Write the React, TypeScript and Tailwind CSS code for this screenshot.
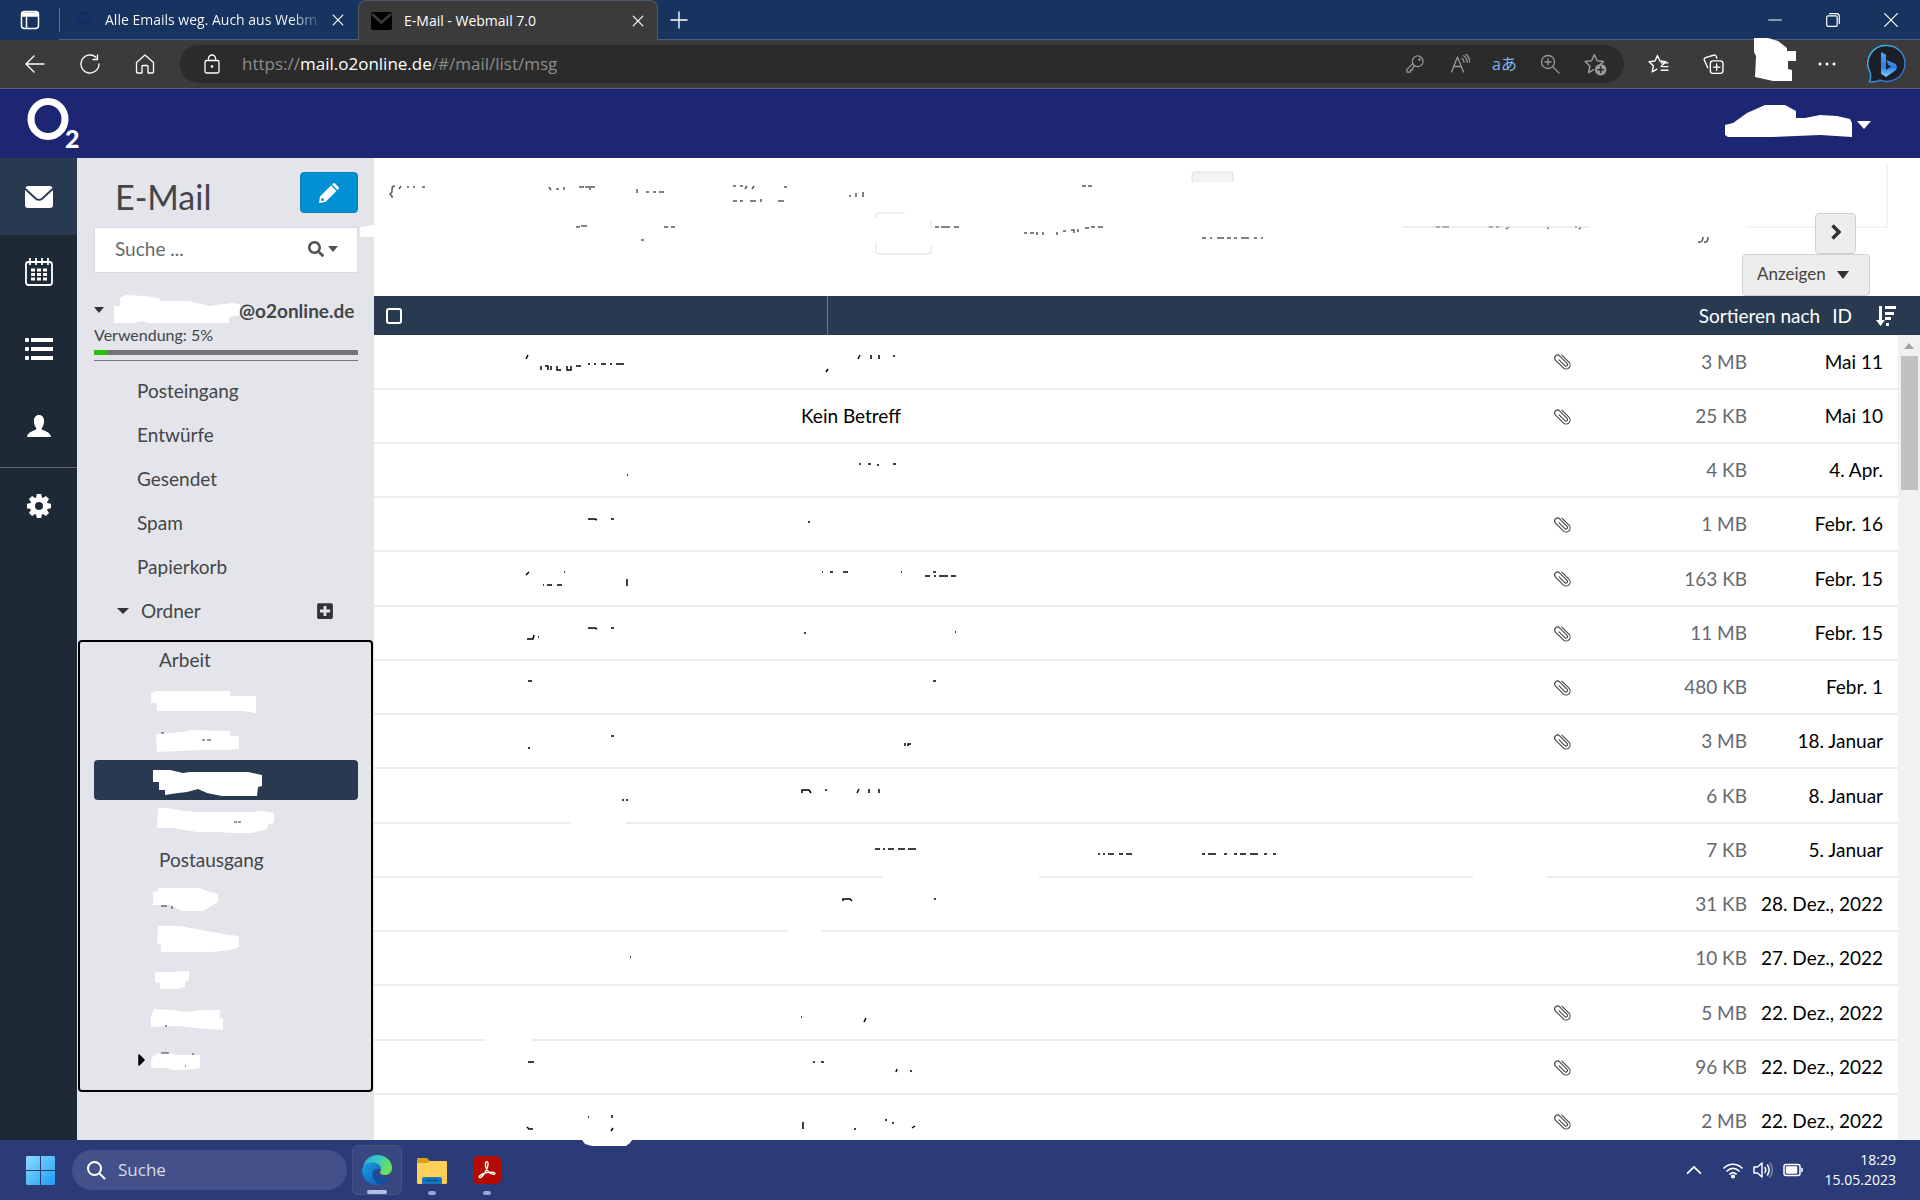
import React from "react";
import { FaCaretRight, FaPlusSquare, FaSearch } from "react-icons/fa";

// Define the type for one message in the list
interface Message {
  subject?: string;
  attachment?: boolean;
  size: string;
  date: string;
  // leftovers of the covered sender and subject
  marks?: string;
  // covered stretches of the line under the row: [x, width]
  gaps?: number[][];
}

interface Folder {
  name?: string;
  cover?: string;
  marks?: string;
  active?: boolean;
  expandable?: boolean;
}

const messages: Message[] = [
  {
    attachment: true,
    size: "3 MB",
    date: "Mai 11",
    marks:
      "M154 20l-2 4M167 31v4M171 31h3v4M177 31v4M183 31v4h4M193 31v4h4v-4M202 31h5M214 29h2M220 29h2M227 29h5M236 29h2M242 29h8M486 20l-2 4M497 20v4M505 20v4M520 20v2M454 34l-2 3",
  },
  { subject: "Kein Betreff", attachment: true, size: "25 KB", date: "Mai 10" },
  { size: "4 KB", date: "4. Apr.", marks: "M485 20h2M494 20h3M504 20v2M519 20h3M253 31h1" },
  { attachment: true, size: "1 MB", date: "Febr. 16", marks: "M215 22v-1h6l2 1M237 21h3M434 24h2" },
  {
    attachment: true,
    size: "163 KB",
    date: "Febr. 15",
    marks:
      "M155 20l-3 3M190 20h1M169 33h1M173 33h5M183 33h5M253 27v7M448 20h1M456 20h3M469 20h5M527 20h1M559 20h3M551 24h5M560 24h2M565 24h9M577 24h5",
  },
  {
    attachment: true,
    size: "11 MB",
    date: "Febr. 15",
    marks: "M215 22v-1h6l2 1M237 21h3M153 32h6l1-4M164 30h1M430 26h2M581 25h1",
  },
  { attachment: true, size: "480 KB", date: "Febr. 1", marks: "M154 20h4M559 20h3" },
  { attachment: true, size: "3 MB", date: "18. Januar", marks: "M237 21h3M154 33h2M531 28v3M534 31v-2h3" },
  {
    size: "6 KB",
    date: "8. Januar",
    marks: "M428 24v-3h7l2 3M451 21h2M485 20l-2 4M495 20v4M505 20v4M248 31h2M252 31h2",
    gaps: [[197, 55]],
  },
  {
    size: "7 KB",
    date: "5. Januar",
    marks:
      "M501 25h5M509 25h2M514 25h6M524 25h7M534 25h8M724 30h2M729 30h2M734 30h6M745 30h4M752 30h6M828 30h3M834 30h8M850 30h3M860 30h3M866 30h6M876 30h8M890 30h3M899 30h3",
    gaps: [[508, 157], [1099, 74]],
  },
  { size: "31 KB", date: "28. Dez., 2022", marks: "M469 23v-2h7l2 2M560 21h2", gaps: [[414, 34]] },
  { size: "10 KB", date: "27. Dez., 2022", marks: "M256 25h1" },
  {
    attachment: true,
    size: "5 MB",
    date: "22. Dez., 2022",
    marks: "M492 32l-2 4M427 31h1",
    gaps: [[112, 46]],
  },
  {
    attachment: true,
    size: "96 KB",
    date: "22. Dez., 2022",
    marks: "M154 21h6M439 21h2M447 21h3M523 28l-1 3M536 30h2",
  },
  {
    attachment: true,
    size: "2 MB",
    date: "22. Dez., 2022",
    marks: "M153 32l2 2h4M238 20v3M239 33l-2 3M214 22h1M429 27v7M511 25h2M519 27v2M480 34h2M541 31l-3 2",
  },
];

const mainFolders = ["Posteingang", "Entwürfe", "Gesendet", "Spam", "Papierkorb"];

const subFolders: Folder[] = [
  { name: "Arbeit" },
  { cover: "0,13 6,11 79,11 79,16 105,16 105,33 92,31 6,31 6,23 0,23" },
  { cover: "5,14 31,12 41,10 79,11 79,16 88,16 88,29 79,30 49,30 6,32", marks: "M10 13h3M51 20h3M56 20h4" },
  {
    active: true,
    cover:
      "2,10 19,10 32,13 39,12 97,12 111,15 111,26 107,27 106,36 71,36 56,33 47,29 36,32 27,33 14,35 14,30 8,30 8,22 2,22",
  },
  {
    cover: "7,8 17,8 32,11 49,12 99,12 109,11 123,13 123,23 117,24 116,29 101,33 82,33 66,32 46,32 22,28 6,28",
    marks: "M83 22h3M87 22h3",
  },
  { name: "Postausgang" },
  {
    cover: "2,12 7,11 7,8 49,8 56,11 67,14 67,22 62,25 52,31 31,31 19,25 2,25",
    marks: "M10 26h6M21 26v3",
  },
  { cover: "7,6 29,6 56,11 79,15 88,16 88,27 79,30 62,32 10,32 10,25 6,24" },
  { cover: "4,12 16,12 38,11 38,20 34,22 34,27 26,29 9,29 9,23 4,22" },
  { cover: "3,9 21,10 36,12 49,10 69,10 69,18 72,19 72,30 46,28 29,26 16,26 0,27 0,16", marks: "M14 26h2" },
  {
    expandable: true,
    cover: "0,18 7,13 19,13 26,15 49,15 49,28 34,30 21,30 16,28 0,28",
    marks: "M10 13h8M41 14h2M34 26h1",
  },
];

// Thin line icon used all over the browser window
const LineIcon: React.FC<{ size?: number; width?: number; children: React.ReactNode }> = ({
  size = 20,
  width = 1.3,
  children,
}) => (
  <svg
    width={size}
    height={size}
    viewBox="0 0 20 20"
    fill="none"
    stroke="currentColor"
    strokeWidth={width}
    strokeLinecap="round"
    strokeLinejoin="round"
    className="shrink-0"
  >
    {children}
  </svg>
);

const CloseIcon = () => (
  <LineIcon size={12} width={2}>
    <path d="M2 2l16 16M18 2L2 18" />
  </LineIcon>
);

const starPath = "M9 1.5l2.4 5.2 5.6.7-4.1 3.8M9 1.5L6.600 6.700l-5.600.7 4.100 3.900L4 17l4.500-2.600";

const Paperclip = () => (
  <svg width="17" height="17" viewBox="0 0 17 17" fill="none" stroke="#444" strokeWidth="1.1" strokeLinecap="round">
    <path
      d="M12.600 3.500v10a4 4 0 0 1-8 0V2.500a2.900 2.900 0 0 1 5.800 0v10.500a1.600 1.600 0 0 1-3.200 0V5"
      transform="rotate(-45 8.5 8.5)"
    />
  </svg>
);

const TabBar = () => (
  <div className="flex h-10 shrink-0 items-stretch bg-[#17335f] text-sm text-white">
    <button aria-label="Tabaktionen" className="flex w-[59px] items-center justify-center">
      <LineIcon size={20} width={1.500}>
        <rect x="1.500" y="1.500" width="17" height="17" rx="3" />
        <path d="M2 3h16v3H2z" fill="currentColor" />
        <path d="M6.500 6v12" />
      </LineIcon>
    </button>
    <div className="flex w-[299px] items-center border-b border-[#4a5f84]">
      <span className="h-6 w-px bg-[#5a6f92]" />
      <span className="ml-4 flex w-[29px] items-end text-[#122a6c]">
        <svg width="18" height="18" viewBox="0 0 18 18">
          <circle cx="7" cy="7" r="5.500" fill="none" stroke="currentColor" strokeWidth="2" />
          <path d="M13 12.500q3-1 3 1l-3 3h4" fill="none" stroke="currentColor" />
        </svg>
      </span>
      <span className="w-[219px] bg-linear-to-r from-white from-85% to-[#17335f] bg-clip-text whitespace-nowrap text-transparent">
        Alle Emails weg. Auch aus Webm
      </span>
      <button aria-label="Tab schließen" className="ml-1 flex w-5 items-center justify-center">
        <CloseIcon />
      </button>
    </div>
    <div className="flex w-[300px] items-center rounded-t-lg border border-b-0 border-[#4f5765] bg-[#3b3b3b] pl-3">
      <svg width="21" height="18" viewBox="0 0 21 18">
        <rect width="21" height="18" rx="2" fill="#000" />
        <path d="M1 2l9.500 8.500L20 2" fill="none" stroke="#3b3b3b" strokeWidth="2.500" />
      </svg>
      <span className="ml-3">E-Mail - Webmail 7.0</span>
      <button aria-label="Tab schließen" className="mr-[9px] ml-auto flex w-5 items-center justify-center">
        <CloseIcon />
      </button>
    </div>
    <div className="flex flex-1 items-center border-b border-[#4a5f84]">
      <button aria-label="Neuer Tab" className="flex w-[42px] items-center justify-center">
        <LineIcon size={18} width={1.500}>
          <path d="M10 1v18M1 10h18" />
        </LineIcon>
      </button>
      <div className="ml-auto flex h-full">
        <button aria-label="Minimieren" className="flex w-[58px] items-center justify-center">
          <LineIcon size={14} width={1.700}>
            <path d="M1 10h18" />
          </LineIcon>
        </button>
        <button aria-label="Verkleinern" className="flex w-[58px] items-center justify-center">
          <LineIcon size={14} width={1.700}>
            <rect x="1" y="4" width="15" height="15" rx="2" />
            <path d="M5 1h10a4 4 0 0 1 4 4v10" />
          </LineIcon>
        </button>
        <button aria-label="Schließen" className="flex w-[58px] items-center justify-center">
          <LineIcon size={14} width={1.700}>
            <path d="M1 1l18 18M19 1L1 19" />
          </LineIcon>
        </button>
      </div>
    </div>
  </div>
);

const AddressBar = () => (
  <div className="flex h-[49px] shrink-0 items-center border-b border-[#5d6173] bg-[#3b3b3b] text-white">
    <div className="flex w-[180px] shrink-0 items-center gap-[35px] pl-[25px]">
      <button aria-label="Zurück">
        <LineIcon>
          <path d="M1 10h18M9 2l-8 8 8 8" />
        </LineIcon>
      </button>
      <button aria-label="Aktualisieren">
        <LineIcon>
          <path d="M19 10a9 9 0 1 1-3-6.700M17.500 1v4.500H13" />
        </LineIcon>
      </button>
      <button aria-label="Startseite">
        <LineIcon>
          <path d="M1.500 8.500L10 1l8.500 7.500V18a1 1 0 0 1-1 1H13v-6.500a1 1 0 0 0-1-1H8a1 1 0 0 0-1 1V19H2.500a1 1 0 0 1-1-1z" />
        </LineIcon>
      </button>
    </div>
    <div className="flex h-[38px] flex-1 items-center rounded-full bg-[#2b2b2b] pl-[22px]">
      <LineIcon size={20}>
        <rect x="3" y="6.500" width="14" height="12.500" rx="1.500" />
        <path d="M6.500 6.500V4.500a3.500 3.500 0 0 1 7 0v2" />
        <circle cx="10" cy="12.500" r=".7" fill="currentColor" />
      </LineIcon>
      <div className="ml-5 flex-1 text-[17px] leading-6 text-[#8d8d8d]">
        https://<span className="text-white">mail.o2online.de</span>/#/mail/list/msg
      </div>
      <div className="flex items-center text-[#9b9b9b]">
        <button aria-label="Kennwort" className="flex w-[45px] justify-center">
          <LineIcon size={18}>
            <circle cx="13" cy="7" r="6" />
            <circle cx="15" cy="5" r=".8" />
            <path d="M7.500 9.500L1 16v3h4v-2.500h2.500V14l2.500-1.700" />
          </LineIcon>
        </button>
        <button aria-label="Laut vorlesen" className="flex w-[45px] justify-center">
          <LineIcon>
            <path d="M1.500 18L7.500 3l6 15M3.800 12.500h7.500M12 4.500c1.200.8 2 2.200 2 3.800M13.500 1.800c2.300 1.300 3.700 3.700 3.700 6.500M15.500 0c2.800 1.900 4.300 5 4.300 8.300" />
          </LineIcon>
        </button>
        <button aria-label="Übersetzen" className="flex w-[45px] justify-center text-base text-[#76b9ed]">
          aあ
        </button>
        <button aria-label="Zoom" className="flex w-[45px] justify-center">
          <LineIcon>
            <circle cx="8" cy="8" r="6.500" />
            <path d="M13 13l6 6M8 5v6M5 8h6" />
          </LineIcon>
        </button>
        <button aria-label="Zu Favoriten hinzufügen" className="mr-[5px] flex w-[47px] justify-center">
          <LineIcon size={23}>
            <path d={starPath} />
            <circle cx="14.500" cy="14.500" r="5" fill="currentColor" stroke="none" />
            <path d="M14.500 12v5M12 14.500h5" stroke="#2b2b2b" />
          </LineIcon>
        </button>
      </div>
    </div>
    <div className="flex shrink-0 items-center pl-6">
      <button aria-label="Favoriten">
        <LineIcon size={21}>
          <path d={starPath} />
          <path d="M12.500 8.500H19M12.500 12H19M12.500 15.500H19" />
        </LineIcon>
      </button>
      <button aria-label="Sammlungen" className="ml-[34px]">
        <LineIcon size={21}>
          <rect x="7" y="6.500" width="12" height="12" rx="2.500" />
          <path d="M13 9.500v6M10 12.500h6M4.500 13L1.300 6a2 2 0 0 1 1-2.500L10 1.200a2 2 0 0 1 2.500 1l.8 1.800" />
        </LineIcon>
      </button>
      <svg width="42" height="44" viewBox="0 0 42 44" className="-mt-3 -mb-1 mr-[9px] ml-[30px]">
        <polygon
          points="0,0 14,0 24,3 33,10 33,13 42,13 42,23 34,23 34,31 38,32 38,43 19,43 1,39 2,18 0,14"
          fill="#fff"
        />
      </svg>
      <button aria-label="Einstellungen und mehr" className="flex w-11 justify-center">
        <svg width="18" height="4" viewBox="0 0 18 4" fill="#fff">
          <circle cx="2" cy="2" r="1.500" />
          <circle cx="9" cy="2" r="1.500" />
          <circle cx="16" cy="2" r="1.500" />
        </svg>
      </button>
      <button aria-label="Bing" className="mr-[13px] ml-[18px]">
        <svg width="40" height="40" viewBox="0 0 40 40">
          <defs>
            <linearGradient id="bingRing" x1="0" y1="0" x2="1" y2="1">
              <stop offset="0" stopColor="#3ec4e8" />
              <stop offset="1" stopColor="#2f5fd0" />
            </linearGradient>
            <linearGradient id="bingMark" x1="0" y1="0" x2="0" y2="1">
              <stop offset="0" stopColor="#4aa5f5" />
              <stop offset="0.600" stopColor="#2f7be8" />
              <stop offset="1" stopColor="#7fd4f5" />
            </linearGradient>
          </defs>
          <path
            d="M20.500 1.500a18 18 0 1 1-7.500 34.600c-3 1.600-7 2.200-10.500 1.700 1.400-2.500 1.500-5 .7-9.500A18 18 0 0 1 20.500 1.500z"
            fill="#1b1f27"
            stroke="url(#bingRing)"
            strokeWidth="1.500"
          />
          <path
            d="M14 8l5 2.500v15.200l5.500-3.200-3.500-1.600-1.500-4.800 8.500 3.300c2.500 1.400 2.500 5.600 0 7.300L19 33l-5-3.200z"
            fill="url(#bingMark)"
          />
        </svg>
      </button>
    </div>
  </div>
);

const SiteHeader = () => (
  <header className="flex h-[69px] shrink-0 items-center bg-[#1d2673] pb-0.5 text-white">
    <a href="#" aria-label="O2" className="ml-[26px]">
      <svg width="56" height="60" viewBox="0 0 56 60">
        <ellipse cx="22" cy="26" rx="17" ry="17.500" fill="none" stroke="#fff" strokeWidth="7" />
        <text x="39" y="55" fontSize="25" fontWeight="900" fill="#fff" className="font-['Lato',sans-serif]">
          2
        </text>
      </svg>
    </a>
    <button aria-label="Benutzermenü" className="mr-[49px] ml-auto flex items-center gap-[5px] pb-1">
      <svg width="127" height="32" viewBox="0 0 127 32">
        <polygon
          points="0,20 8,18 22,8 40,0 60,0 71,6 71,13 80,13 95,10 112,11 125,14 127,18 127,32 95,30 47,32 3,32 0,30"
          fill="#fff"
        />
      </svg>
      <svg width="14" height="8" viewBox="0 0 14 8" className="mt-2">
        <path d="M0 0h14L7 8z" fill="#fff" />
      </svg>
    </button>
  </header>
);

const Rail = () => (
  <nav className="flex w-[77px] shrink-0 flex-col bg-[#1e2936] text-white">
    <a href="#mail" aria-label="E-Mail" className="flex h-[77px] items-center justify-center bg-[#293a50]">
      <svg width="28" height="22" viewBox="0 0 28 22" fill="currentColor">
        <path d="M3 0h22a3 3 0 0 1 2.500 1.700L16.500 12q-2.500 2-5 0L.5 1.700A3 3 0 0 1 3 0z" />
        <path d="M0 4l10 9.300q4 3 8 0L28 4v15a3 3 0 0 1-3 3H3a3 3 0 0 1-3-3z" />
      </svg>
    </a>
    <a href="#calendar" aria-label="Kalender" className="flex h-[77px] items-center justify-center pb-1">
      <svg width="28" height="28" viewBox="0 0 28 28" fill="none" stroke="currentColor" strokeWidth="1.800">
        <rect x="1" y="4" width="26" height="23" rx="2.500" />
        <path d="M5 0v7M11 0v7M17 0v7M23 0v7" />
        <path d="M6 12h4M12 12h4M18 12h4M6 16.500h4M12 16.500h4M18 16.500h4M6 21h4M12 21h4M18 21h4" strokeWidth="3" />
      </svg>
    </a>
    <a href="#tasks" aria-label="Aufgaben" className="flex h-[77px] items-center justify-center pb-1">
      <svg width="28" height="22" viewBox="0 0 28 22" fill="currentColor">
        <rect y="0" width="4" height="4" rx="1" />
        <rect y="9" width="4" height="4" rx="1" />
        <rect y="18" width="4" height="4" rx="1" />
        <rect x="6" y="0" width="22" height="4" />
        <rect x="6" y="9" width="22" height="4" />
        <rect x="6" y="18" width="22" height="4" />
      </svg>
    </a>
    <a
      href="#contacts"
      aria-label="Kontakte"
      className="flex h-[79px] items-center justify-center border-b border-[#5b6570] pb-1"
    >
      <svg width="24" height="22" viewBox="0 0 26 22" preserveAspectRatio="none" fill="currentColor">
        <path d="M13 0c3.500 0 5.500 2.500 5.500 6 0 3-1 5.500-2.500 7v1.500c3 1.500 9.500 2.500 10 7.500H0c.5-5 7-6 10-7.500V13c-1.500-1.500-2.500-4-2.500-7C7.500 2.500 9.500 0 13 0z" />
      </svg>
    </a>
    <a href="#settings" aria-label="Einstellungen" className="flex h-[77px] items-center justify-center pb-0.5">
      <svg width="24" height="24" viewBox="0 0 24 24">
        <g fill="currentColor">
          <path d="M9.800 0h4.400l1 5h-6.400zM9.800 24h4.400l1-5h-6.400zM0 9.800v4.400l5 1v-6.400zM24 9.800v4.400l-5 1v-6.400z" />
          <path
            d="M9.800 0h4.400l1 5h-6.400zM9.800 24h4.400l1-5h-6.400zM0 9.800v4.400l5 1v-6.400zM24 9.800v4.400l-5 1v-6.400z"
            transform="rotate(45 12 12)"
          />
        </g>
        <circle cx="12" cy="12" r="6.500" fill="none" stroke="currentColor" strokeWidth="5" />
      </svg>
    </a>
  </nav>
);

const Sidebar = () => (
  <aside className="relative flex w-[297px] shrink-0 flex-col bg-[#e4e5ea] text-[19px] leading-7 text-[#434548]">
    <div className="flex h-[69px] items-start justify-between pt-3.5 pr-4 pl-[38px]">
      <h1 className="pt-[3px] text-[34px] leading-[44px]">E-Mail</h1>
      <button
        aria-label="Neue E-Mail"
        className="flex h-[41px] w-[58px] items-center justify-center rounded border border-[#0b7cb5] bg-[#0090d3] text-white"
      >
        <svg width="20" height="20" viewBox="0 0 20 20" fill="currentColor">
          <path d="M13 1.500l1-1q1-1 2 0L19.500 4q1 1 0 2l-1 1z" />
          <path d="M12 2.500L17.500 8 6.500 19 0 20l1-6.500zM2.500 15l-.4 2.900L5 17.500l-.3-2.100z" fillRule="evenodd" />
        </svg>
      </button>
    </div>
    <form className="mr-4 ml-[17px] flex h-[46px] items-center border border-[#d9dadd] bg-white pr-[19px] pb-0.5 pl-5">
      <input
        type="text"
        aria-label="Suche"
        placeholder="Suche ..."
        className="w-0 flex-1 outline-none placeholder:text-[#66696c]"
      />
      <button type="button" aria-label="Suchen" className="flex items-center gap-1 text-[#505255]">
        <FaSearch size={16} />
        <svg width="10" height="6" viewBox="0 0 10 6" fill="currentColor">
          <path d="M0 0h10L5 6z" />
        </svg>
      </button>
    </form>
    {/* covered spot beside the search box */}
    <svg width="14" height="13" viewBox="0 0 14 13" className="absolute top-[66px] right-0">
      <path d="M0 3L14 1v12H0z" fill="#fff" />
    </svg>

    {/* Account and quota */}
    <div className="mt-[22px] mr-4 ml-[17px] flex h-[30px] items-center">
      <svg width="10" height="6" viewBox="0 0 10 6" fill="#333">
        <path d="M0 0h10L5 6z" />
      </svg>
      <svg width="126" height="30" viewBox="0 0 126 30" className="ml-2.5 shrink-0">
        <polygon
          points="0,11 6,11 6,3 12,0 30,1 45,3 46,6 75,6 95,11 118,8 126,9 126,20 115,22 115,28 35,28 28,26 20,28 0,28"
          fill="#fff"
        />
      </svg>
      <span className="-ml-px pt-0.5 font-bold">@o2online.de</span>
    </div>
    <div className="mr-4 ml-[17px] border-b border-[#77797c] pb-[5px]">
      <label htmlFor="quota" className="block text-base leading-5">
        Verwendung: 5%
      </label>
      <div id="quota" role="progressbar" aria-valuenow={5} className="mt-[5px] h-[5px] bg-[#757575]">
        <div className="h-full bg-[#2dbe14]" style={{ width: "5%" }} />
      </div>
    </div>

    {/* Folders */}
    <ul className="mt-2">
      {mainFolders.map((name) => (
        <li key={name} className="flex h-11 items-center pl-[60px]">
          <a href="#folder">{name}</a>
        </li>
      ))}
      <li className="flex h-11 items-center pr-10 pl-10">
        <svg width="12" height="6" viewBox="0 0 12 6" fill="#333">
          <path d="M0 0h12L6 6z" />
        </svg>
        <span className="ml-3 flex-1">Ordner</span>
        <button aria-label="Ordner hinzufügen">
          <FaPlusSquare size={18} color="#333" />
        </button>
      </li>
    </ul>
    <ul className="mx-px mt-[7px] rounded pb-3 outline-2 -outline-offset-2 outline-black">
      {subFolders.map((folder, i) => (
        <li
          key={i}
          className={
            folder.active
              ? "mr-[15px] ml-4 flex h-10 items-center rounded-sm bg-[#293a50] pl-[57px]"
              : "relative flex h-10 items-center pl-[73px]"
          }
        >
          {folder.expandable && <FaCaretRight size={20} color="#000" className="absolute left-[54px]" />}
          {folder.name ? (
            <a href="#folder" className="pl-2">{folder.name}</a>
          ) : (
            <svg width="124" height="40" viewBox="0 0 124 40">
              <polygon points={folder.cover} fill="#fff" />
              <path d={folder.marks} fill="none" stroke="#333" />
            </svg>
          )}
        </li>
      ))}
    </ul>
  </aside>
);

const Toolbar = () => (
  <div className="relative flex h-[138px] shrink-0 flex-col items-end pt-[55px]">
    {/* what is left of the covered notice */}
    <svg className="pointer-events-none absolute top-0 left-0 h-[138px] w-full" fill="none" stroke="#55585b" strokeWidth="1.500">
      <path d="M21 28q-3 0-3 3v3l-2 2 2 2v2M27 28l-2 3M33 29h2M39 29h2M48 29h3M175 29l2 3M182 31h3M190 29v3M205 29h5M211 29h10M215 31h2M263 31v4M272 34h3M279 34h3M285 34h5M359 28h3M366 28h3M373 28l-2 3M380 28l-2 3M410 29h3M359 43h4M366 43h3M376 43h6M387 41v3M404 43h6M476 37v2M482 35v4M489 34v5" />
      <path d="M708 28h4M714 28h4M202 69h4M207 68h6M290 69h4M297 69h4M267 82h3M561 69h4M567 69h9M580 69h5M650 75h3M656 75h4M663 74v3M669 74v3M683 74v3M689 73h3M697 72h3v3M704 71v3M711 70h4M717 69h4M724 69h5M828 80h4M836 80h2M843 80h7M853 80h4M860 80h3M867 80h8M880 80h3M887 80h2" />
      <path d="M1062 69h4M1068 69h7M1115 69h4M1122 69h3M1135 69l-3 2M1174 69v2M1201 69h2M1207 69l-2 2M1329 79q0 6-5 5M1334 79q0 6-4 5" />
      <path d="M502 60v-3q0-2 3-2h26M502 85v8q0 3 3 3h49q3 0 3-3v-5M557 62v9M1028 69h188" stroke="#dddddf" strokeWidth="1" />
      <path d="M818 24v-7q0-3 3-3h35q3 0 3 3v7z" fill="#f3f3f3" stroke="none" />
      <path d="M818 24v-7q0-3 3-3h35q3 0 3 3v7" stroke="#dcdcdc" strokeWidth="1" />
      <path d="M1513 5v63M1372 69h142" stroke="#f4f4f6" strokeWidth="2" />
    </svg>
    <button
      aria-label="Weiter"
      className="relative mr-16 flex h-[41px] w-[41px] items-center justify-center rounded border border-[#cfcfcf] bg-[#ededed] pb-1"
    >
      <svg width="10" height="16" viewBox="0 0 10 16" fill="none" stroke="#333" strokeWidth="3.500">
        <path d="M1.500 1.500L8 8l-6.500 6.500" />
      </svg>
    </button>
    <button className="mr-[50px] flex h-[42px] w-32 items-center rounded border border-[#cfcfcf] bg-[#ededed] pb-0.5 pl-3.5 text-[17px] text-[#444]">
      Anzeigen
      <svg width="12" height="8" viewBox="0 0 12 8" className="mt-0.5 ml-[11px]" fill="#333">
        <path d="M0 0h12L6 8z" />
      </svg>
    </button>
  </div>
);

const MessageList = () => (
  <div className="flex min-h-0 flex-1 flex-col text-[19px] leading-7">
    <div className="flex h-[39px] shrink-0 items-center bg-[#293a50] text-white">
      <div className="flex h-full w-[454px] items-center border-r border-[#7d7b6c] pl-3">
        <input
          type="checkbox"
          aria-label="Alle auswählen"
          className="h-4 w-4 appearance-none rounded-[3px] border-2 border-white"
        />
      </div>
      <span className="ml-auto">Sortieren nach</span>
      <button className="ml-3">ID</button>
      <button aria-label="Sortierung umkehren" className="mr-6 ml-6">
        <svg width="20" height="20" viewBox="0 0 20 20" fill="currentColor">
          <path d="M3 0h3v14h3l-4.500 6L0 14h3zM9 0h11v3H9zM9 6h9v3H9zM9 11h6v3H9zM10 17h3v3h-3z" />
        </svg>
      </button>
    </div>
    <div className="flex min-h-0 flex-1 overflow-hidden">
      <div className="min-w-0 flex-1">
        <table className="w-full table-fixed border-separate border-spacing-0 text-black">
          <tbody>
            {messages.map((message, i) => (
              <tr key={i} className="h-[54px] nth-[4n+1]:h-[55px] [&>td]:border-b-2 [&>td]:border-[#ececec]">
                <td className="relative w-[427px] p-0">
                  <svg width="100%" height="54" className="pointer-events-none absolute top-0 left-0 overflow-visible">
                    <path d={message.marks} fill="none" stroke="#000" strokeWidth="1.500" />
                    {message.gaps?.map(([x, width]) => (
                      <rect key={x} x={x} y="50" width={width} height="7" fill="#fff" />
                    ))}
                  </svg>
                </td>
                <td className="p-0">{message.subject}</td>
                <td className="w-[61px] p-0">{message.attachment && <Paperclip />}</td>
                <td className="w-[132px] p-0 text-right text-[#66696c]">{message.size}</td>
                <td className="w-[151px] py-0 pr-[15px] pl-0 text-right">{message.date}</td>
              </tr>
            ))}
          </tbody>
        </table>
      </div>
      <div className="flex w-[22px] shrink-0 flex-col items-center bg-[#f1f1f1] pt-2">
        <svg width="10" height="6" viewBox="0 0 10 6" fill="#a3a3a3">
          <path d="M0 6h10L5 0z" />
        </svg>
        <div className="mt-[7px] h-[134px] w-[17px] bg-[#c1c1c1]" />
      </div>
    </div>
  </div>
);

const Taskbar = () => (
  <footer className="relative flex h-[60px] shrink-0 items-center bg-[#2a3b78] text-white">
    <svg width="50" height="6" viewBox="0 0 50 6" className="absolute top-0 left-[582px]">
      <path d="M0 0h50l-2 3-4 3H10L3 4z" fill="#fff" />
    </svg>
    <button aria-label="Start" className="ml-[26px]">
      <svg width="29" height="29" viewBox="0 0 29 29">
        <defs>
          <linearGradient id="start" x1="0" y1="0" x2="1" y2="1">
            <stop offset="0" stopColor="#8fdcff" />
            <stop offset="1" stopColor="#1a9cf5" />
          </linearGradient>
        </defs>
        <path d="M1 0h13v14H0V1zM15 0h13l1 1v13H15zM0 15h14v14H1l-1-1zM15 15h14v13l-1 1H15z" fill="url(#start)" />
      </svg>
    </button>
    <label className="ml-[17px] flex h-10 w-[275px] items-center gap-3 rounded-full bg-[#435089] pl-3.5">
      <LineIcon size={20} width={2}>
        <circle cx="8.500" cy="8.500" r="6.500" />
        <path d="M13.500 13.500l5 5" />
      </LineIcon>
      <input
        type="text"
        aria-label="Suche in Windows"
        placeholder="Suche"
        className="w-40 text-[17px] outline-none placeholder:text-[#d9dcea]"
      />
    </label>
    <button
      aria-label="Microsoft Edge"
      className="ml-[5px] flex h-[50px] w-[50px] flex-col items-center justify-end rounded-md border border-[#46548c] bg-[#38477f]"
    >
      <svg width="30" height="30" viewBox="0 0 30 30">
        <defs>
          <linearGradient id="edgeTop" x1="0" y1="0" x2="1" y2=".4">
            <stop offset="0" stopColor="#2aa9dc" />
            <stop offset=".5" stopColor="#36c8c8" />
            <stop offset="1" stopColor="#6be35a" />
          </linearGradient>
          <linearGradient id="edgeLeft" x1="0" y1="0" x2="1" y2="1">
            <stop offset="0" stopColor="#1b9de2" />
            <stop offset="1" stopColor="#0f5fb8" />
          </linearGradient>
        </defs>
        <path
          d="M1 13C2 5 8 0 15 0c9 0 15 6 15 13 0 4.500-3.500 7-7 7-3 0-5-1.200-5-2.500 0-1 1-1.500 1-3.500 0-3.500-4-6-8-6-5 0-9 3-10 5z"
          fill="url(#edgeTop)"
        />
        <path
          d="M0 15c1-4.500 5-7.500 10-7.500 4.500 0 9 2.500 9 6.500h-4c-4 0-5.500 4-4 8 1.500 4.200 5 7 8 7.500-1 .4-2.500.5-4 .5C6 30 0 23 0 15z"
          fill="url(#edgeLeft)"
        />
        <path
          d="M15 14c-3 1-4.500 4-3.500 8 1 4 4.500 7 7.500 7.500 4-1 7.500-4 9-7-1.500 1-3.500 1.200-5.500 1-4.500-.5-7.500-3.500-7.500-7.500z"
          fill="#1250a0"
        />
      </svg>
      <span className="mt-[5px] h-1 w-5 rounded-full bg-[#b3c0e6]" />
    </button>
    <button aria-label="Explorer" className="ml-[15px] flex h-[50px] flex-col items-center justify-end">
      <svg width="30" height="28" viewBox="0 0 30 28">
        <path d="M0 2q0-1 1-1h9l3 3h16v8H0z" fill="#d9a01a" />
        <path d="M0 6h10l3-2h16q1 0 1 1v21q0 1-1 1H1q-1 0-1-1z" fill="#ffd058" />
        <path d="M5 27v-5q0-2 2-2h16q2 0 2 2v5z" fill="#1677c0" />
        <path d="M9 23.500h12" stroke="#0c4f8c" strokeWidth="1.500" />
      </svg>
      <span className="mt-1.5 h-1 w-2 rounded-full bg-[#9aa6d1]" />
    </button>
    <button aria-label="Adobe Acrobat" className="ml-[26px] flex h-[50px] flex-col items-center justify-end">
      <svg width="28" height="28" viewBox="0 0 28 28">
        <rect width="28" height="28" rx="5" fill="#b30b00" />
        <path
          d="M13 6c2-1 2.500 1.500 1.500 5-1.200 4-4.500 9.500-7 10.500-1.500.5-2-1 0-2.300 3-2 8-3.200 12-3 3 .2 3 2.300.7 2.200-3.200-.2-7-4-7.700-8.400-.3-2-.2-3.500.5-4z"
          fill="none"
          stroke="#fff"
          strokeWidth="1.400"
        />
      </svg>
      <span className="mt-[7px] h-1 w-2 rounded-full bg-[#9aa6d1]" />
    </button>

    {/* Tray */}
    <div className="mr-6 ml-auto flex items-center">
      <LineIcon size={16} width={2.200}>
        <path d="M2 14l8-8 8 8" />
      </LineIcon>
      <div className="mr-[22px] ml-[21px] flex items-center gap-2.5">
        <LineIcon size={20} width={1.700}>
          <path d="M1 8c5-5 13-5 18 0M4 11c3.500-3.500 8.500-3.500 12 0M7 14c1.800-1.600 4.200-1.600 6 0" />
          <circle cx="10" cy="16.500" r="1.200" fill="currentColor" />
        </LineIcon>
        <LineIcon size={20} width={1.500}>
          <path d="M1 7h3.500L9 3v14l-4.500-4H1zM12 7.500c1 1.500 1 3.500 0 5M14.500 5c2 3 2 7 0 10" />
          <path d="M17 3c3 4 3 10 0 14" opacity=".4" />
        </LineIcon>
        <LineIcon size={20} width={1.500}>
          <rect x="1" y="4.500" width="16" height="11" rx="2" />
          <rect x="3.500" y="7" width="10" height="6" fill="currentColor" />
          <path d="M19 8.500v3" />
        </LineIcon>
      </div>
      <div className="text-right text-sm leading-5">
        <p>18:29</p>
        <p>15.05.2023</p>
      </div>
    </div>
  </footer>
);

const App: React.FC = () => {
  return (
    <div className="flex h-screen flex-col overflow-hidden bg-white font-['Open_Sans','Noto_Sans_CJK_JP',sans-serif]">
      <TabBar />
      <AddressBar />
      <div className="flex min-h-0 flex-1 flex-col font-['Lato',sans-serif]">
        <SiteHeader />
        <div className="flex min-h-0 flex-1">
          <Rail />
          <Sidebar />
          <main className="flex min-w-0 flex-1 flex-col">
            <Toolbar />
            <MessageList />
          </main>
        </div>
      </div>
      <Taskbar />
    </div>
  );
};

export default App;
